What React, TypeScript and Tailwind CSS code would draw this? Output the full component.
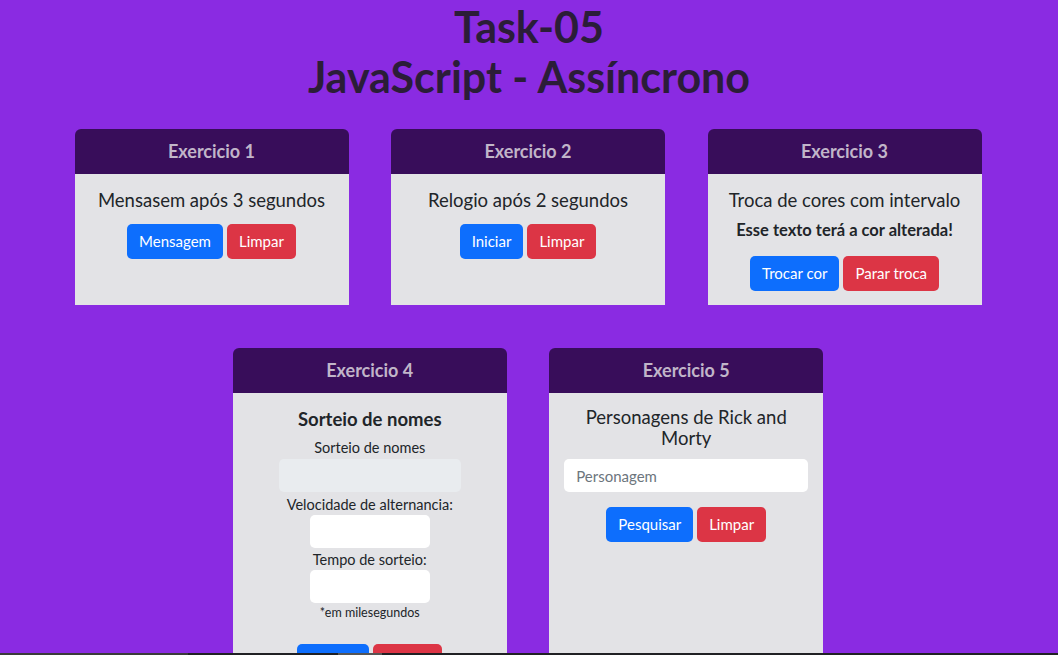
const font = "font-['Lato','Noto_Sans',sans-serif]";

function Btn({ color, children }: { color: "blue" | "red"; children: React.ReactNode }) {
  const bg = color === "blue" ? "bg-[#0d6efd]" : "bg-[#dc3545]";
  return (
    <button className={`${bg} h-[35px] rounded-[5px] px-3 text-[15px] leading-none text-white`}>
      {children}
    </button>
  );
}

function Card({ title, children }: { title: string; children: React.ReactNode }) {
  return (
    <section className="flex w-[274px] flex-col">
      <header className="flex h-[45px] items-center justify-center rounded-t-[6px] bg-[#380d5a] text-[18px] font-bold text-[#c1b5c9]">
        {title}
      </header>
      <div className="flex-1 bg-[#e3e3e6] px-[15px] pt-[14px] pb-[14px] text-center text-[#212529]">
        {children}
      </div>
    </section>
  );
}

export default function App() {
  return (
    <div className={`${font} min-h-screen bg-[#8a2be2] pb-10`}>
      <h1 className="pt-[2px] text-center text-[43px] leading-[50px] font-bold text-[#2b1d38]">
        Task-05
        <br />
        JavaScript - Assíncrono
      </h1>

      <main className="mx-auto mt-[27px] flex max-w-[910px] flex-wrap justify-center gap-x-[42.5px] gap-y-[43px] pr-[2px]">
        <Card title="Exercicio 1">
          <h5 className="mb-[12px] text-[18.5px] leading-[24px]">Mensasem após 3 segundos</h5>
          <div className="flex justify-center gap-1">
            <Btn color="blue">Mensagem</Btn>
            <Btn color="red">Limpar</Btn>
          </div>
        </Card>

        <Card title="Exercicio 2">
          <h5 className="mb-[12px] text-[18.5px] leading-[24px]">Relogio após 2 segundos</h5>
          <div className="flex justify-center gap-1">
            <Btn color="blue">Iniciar</Btn>
            <Btn color="red">Limpar</Btn>
          </div>
        </Card>

        <Card title="Exercicio 3">
          <h5 className="mb-[7px] text-[18.5px] leading-[24px]">Troca de cores com intervalo</h5>
          <p className="mb-[15px] text-[16.5px] leading-[22px] font-bold">Esse texto terá a cor alterada!</p>
          <div className="flex justify-center gap-1">
            <Btn color="blue">Trocar cor</Btn>
            <Btn color="red">Parar troca</Btn>
          </div>
        </Card>

        <Card title="Exercicio 4">
          <h5 className="mb-[6px] text-[18.5px] leading-[24px] font-bold">Sorteio de nomes</h5>
          <div className="flex flex-col items-center text-[14.5px] leading-[21px]">
            <label>Sorteio de nomes</label>
            <input disabled className="mt-[1px] h-[33px] w-[182px] rounded-[5px] bg-[#e9ecef]" />
            <label className="mt-[2px]">Velocidade de alternancia:</label>
            <input className="h-[33px] w-[120px] rounded-[5px] bg-white outline-none" />
            <label className="mt-[1px]">Tempo de sorteio:</label>
            <input className="h-[33px] w-[120px] rounded-[5px] bg-white outline-none" />
            <small className="mt-[3px] text-[12.5px] leading-[14px]">*em milesegundos</small>
          </div>
          <div className="mt-[24px] flex justify-center gap-1">
            <Btn color="blue">Sortear</Btn>
            <Btn color="red">Limpar</Btn>
          </div>
        </Card>

        <Card title="Exercicio 5">
          <h5 className="mb-[10px] text-[18.5px] leading-[21px]">Personagens de Rick and Morty</h5>
          <input
            placeholder="Personagem"
            className="h-[33px] w-full rounded-[5px] bg-white px-3 text-[15px] placeholder:text-[#6c757d] outline-none"
          />
          <div className="mt-[15px] flex justify-center gap-1">
            <Btn color="blue">Pesquisar</Btn>
            <Btn color="red">Limpar</Btn>
          </div>
        </Card>
      </main>

      <div className="fixed inset-x-0 bottom-0 flex h-[2px]">
        <div className="w-[188px] bg-[#3a3a3a]" />
        <div className="w-[150px] bg-[#202124]" />
        <div className="w-[44px] bg-[#555]" />
        <div className="flex-1 bg-[#202124]" />
      </div>
    </div>
  );
}
